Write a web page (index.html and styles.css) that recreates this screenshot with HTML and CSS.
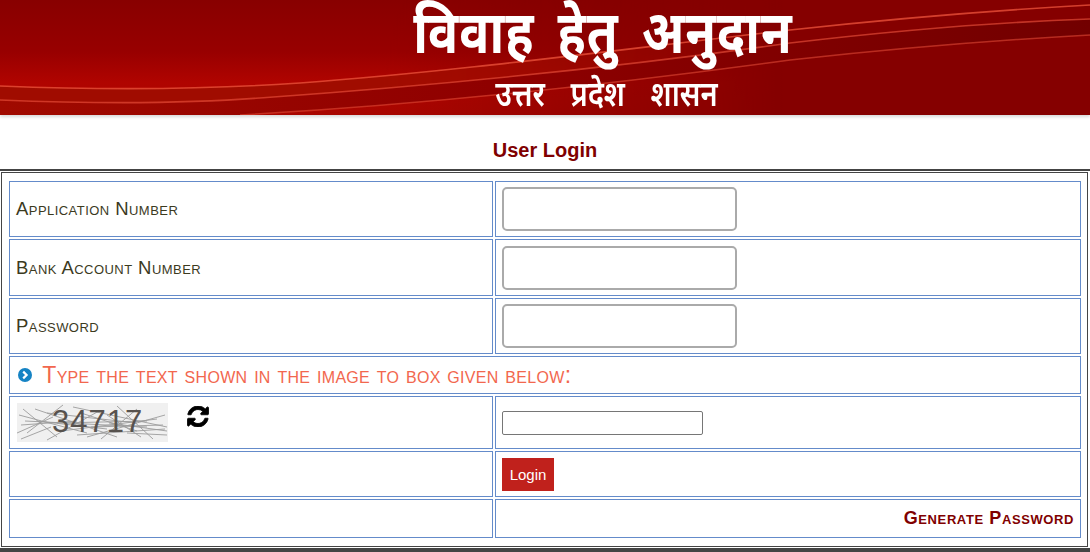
FILE: index.html
```
<!DOCTYPE html>
<html lang="hi">
<head>
<meta charset="utf-8">
<title>User Login</title>
<link rel="stylesheet" href="styles.css">
</head>
<body>
<header class="banner">
  <svg class="swoosh" viewBox="0 0 1090 115" preserveAspectRatio="none" aria-hidden="true">
    <defs>
      <linearGradient id="glow" x1="0" y1="0" x2="0" y2="1">
        <stop offset="0" stop-color="#880000"/>
        <stop offset="0.45" stop-color="#980000"/>
        <stop offset="0.72" stop-color="#b00400"/>
        <stop offset="1" stop-color="#a80600"/>
      </linearGradient>
      <linearGradient id="fade" x1="0" y1="0" x2="1" y2="0">
        <stop offset="0.35" stop-color="#fff"/>
        <stop offset="0.72" stop-color="#000"/>
      </linearGradient>
      <mask id="leftside">
        <rect width="1090" height="115" fill="url(#fade)"/>
      </mask>
      <linearGradient id="band" x1="0" y1="0" x2="1" y2="0">
        <stop offset="0" stop-color="#a00a00"/>
        <stop offset="0.45" stop-color="#8f0000"/>
        <stop offset="0.8" stop-color="#7c0000"/>
        <stop offset="1" stop-color="#720000"/>
      </linearGradient>
      <filter id="soft"><feGaussianBlur stdDeviation="0.5"/></filter>
    </defs>
    <rect width="1090" height="115" fill="#850000"/>
    <rect width="1090" height="115" fill="url(#glow)" mask="url(#leftside)"/>
    <path d="M0 86C100 90 200 90 300 83C450 72 600 52 790 30C900 18 1000 10 1090 5V19C1000 22 900 30 790 43C600 70 400 88 260 98C180 104 100 104 0 100Z" fill="#a00c00" mask="url(#leftside)"/>
    <path d="M0 100C100 104 180 104 260 98C400 88 600 70 790 43C900 30 1000 22 1090 19V35C1000 40 900 48 790 60C600 86 400 106 240 115H0Z" fill="url(#band)"/>
    <g fill="none" stroke="#e8503a" filter="url(#soft)">
      <path d="M0 86C100 90 200 90 300 83C450 72 600 52 790 30C900 18 1000 10 1090 5" stroke-width="1.6" opacity=".8"/>
      <path d="M0 100C100 104 180 104 260 98C400 88 600 70 790 43C900 30 1000 22 1090 19" stroke-width="1.6" opacity=".65"/>
      <path d="M240 115C400 106 600 86 790 60C900 48 1000 40 1090 35" stroke-width="1.5" opacity=".55"/>
    </g>
  </svg>
  <div class="banner-text">
    <div class="banner-main">विवाह हेतु अनुदान</div>
    <div class="banner-sub">उत्तर प्रदेश शासन</div>
  </div>
</header>
<h1 class="title">User Login</h1>
<hr class="rule">
<main class="frame">
  <table class="form">
    <tr class="r-a">
      <td class="label">Application Number</td>
      <td><input class="field" type="text"></td>
    </tr>
    <tr class="r-a2">
      <td class="label">Bank Account Number</td>
      <td><input class="field" type="text"></td>
    </tr>
    <tr class="r-a">
      <td class="label">Password</td>
      <td><input class="field" type="password"></td>
    </tr>
    <tr class="r-b">
      <td colspan="2" class="notice">
        <svg class="bullet" viewBox="0 0 14 14" aria-hidden="true">
          <circle cx="7" cy="7" r="7" fill="#1583c4"/>
          <path d="M5.200 3.600L8.600 7L5.200 10.400" fill="none" stroke="#fff" stroke-width="2.200"/>
        </svg>
        <span>Type the text shown in the image to box given below:</span>
      </td>
    </tr>
    <tr class="r-c">
      <td>
        <div class="captcha-row">
          <div class="captcha">
            <svg class="noise" viewBox="0 0 151 39" aria-hidden="true">
              <rect width="151" height="39" fill="#f0f0f0"/>
              <g fill="none" stroke="#9c9c9c" stroke-width=".9">
                <path d="M2 12L70 30M10 30L46 2M18 6L100 34M30 37L82 8M56 4L150 24M70 34L148 12M100 3L136 36M4 22L60 18M92 20L150 28M120 6L84 36M6 6L40 34M110 30L150 32M40 20L130 18"/>
                <path d="M0 30L36 14M64 10L120 28M74 24L146 22M20 18L90 26M8 18L130 24M44 28L140 16M30 10L120 20M60 32L148 26M90 12L124 34M4 36L34 24"/>
              </g>
            </svg>
            <span class="captcha-code">34717</span>
          </div>
          <svg class="refresh" viewBox="0 0 1536 1536" aria-hidden="true">
            <path d="M1511 928q0 5-1 7-64 268-268 434.500t-478 166.500q-146 0-282.500-55t-243.500-157l-129 129q-19 19-45 19t-45-19-19-45v-448q0-26 19-45t45-19h448q26 0 45 19t19 45-19 45l-137 137q71 66 161 102t187 36q134 0 250-65t186-179q11-17 53-117 8-23 30-23h192q13 0 22.500 9.500t9.500 22.500zm25-800v448q0 26-19 45t-45 19h-448q-26 0-45-19t-19-45 19-45l138-138q-148-137-349-137-134 0-250 65t-186 179q-11 17-53 117-8 23-30 23h-199q-13 0-22.500-9.500t-9.500-22.500v-7q65-268 270-434.500t480-166.500q146 0 284 55.500t245 156.500l130-129q19-19 45-19t45 19 19 45z"/>
          </svg>
        </div>
      </td>
      <td><input class="code-field" type="text"></td>
    </tr>
    <tr class="r-d">
      <td></td>
      <td><button class="login" type="button">Login</button></td>
    </tr>
    <tr class="r-e">
      <td></td>
      <td class="link-cell"><a class="generate" href="#">Generate Password</a></td>
    </tr>
  </table>
</main>
<hr class="rule rule-end">
</body>
</html>
```
FILE: styles.css
```
html, body {
  margin: 0;
  padding: 0;
  background: #fff;
  overflow: hidden;
}
body {
  font-family: "Liberation Sans", Arial, sans-serif;
  color: #3c3a1e;
}
.banner {
  position: relative;
  height: 115px;
  background: #850000;
  box-shadow: 0 2px 3px #d8d8d8;
}
.swoosh {
  display: block;
  width: 100%;
  height: 115px;
}
.banner-text {
  position: absolute;
  inset: 0;
  padding-top: 3px;
  text-align: center;
  color: #fff;
  font-family: "Noto Sans Devanagari", "Lohit Devanagari", "FreeSans", "Noto Sans", sans-serif;
  font-weight: 700;
  white-space: nowrap;
}
.banner-main {
  height: 74px;
  font-size: 50px;
  line-height: 60px;
  letter-spacing: 1px;
  word-spacing: 9px;
  padding-left: 116px;
  transform: scaleY(1.2);
  transform-origin: 50% 0;
}
.banner-sub {
  font-size: 29px;
  line-height: 34px;
  font-weight: 600;
  word-spacing: 18px;
  padding-left: 123px;
  transform: scaleY(1.2);
  transform-origin: 50% 0;
}
.title {
  margin: 0;
  height: 54px;
  padding-top: 23px;
  box-sizing: border-box;
  line-height: 24px;
  text-align: center;
  font-size: 20px;
  font-weight: 700;
  color: #800000;
}
.rule {
  margin: 0;
  border: 0;
  height: 2px;
  background: #444;
}
.rule-end {
  height: 4px;
  margin-top: 1px;
}
.frame {
  margin: 1px 2px 0 1px;
  height: 375px;
  box-sizing: border-box;
  border: 1px solid #444;
  padding: 6px 5px 0;
}
.form {
  width: 1076px;
  border-collapse: separate;
  border-spacing: 2px;
  table-layout: fixed;
}
.form td {
  border: 1px solid #648bca;
  padding: 0 6px;
  box-sizing: border-box;
  vertical-align: middle;
}
.form td:first-child:not([colspan]) {
  width: 484px;
}
.r-a td { height: 56px; }
.r-a2 td { height: 57px; }
.r-b td { height: 38px; }
.r-c td { height: 53px; }
.r-d td { height: 46px; }
.r-e td { height: 39px; }
.label {
  font-size: 18.500px;
  font-variant: small-caps;
  letter-spacing: .45px;
}
.field {
  display: block;
  width: 235px;
  height: 44px;
  box-sizing: border-box;
  border: 2px solid #aaa;
  border-radius: 5px;
  background: #fff;
  margin: 0;
}
.notice {
  font-size: 23px;
  font-variant: small-caps;
  color: #f2674e;
  letter-spacing: .3px;
  white-space: nowrap;
}
.bullet {
  width: 14px;
  height: 14px;
  margin: 0 4px 0 2px;
  vertical-align: 1px;
}
.captcha-row {
  display: flex;
  align-items: flex-start;
  gap: 19px;
  padding-left: 1px;
}
.captcha {
  position: relative;
  width: 151px;
  height: 39px;
}
.noise {
  display: block;
  width: 151px;
  height: 39px;
  filter: blur(.5px);
}
.captcha-code {
  position: absolute;
  left: 35px;
  top: 2px;
  font-size: 31px;
  line-height: 34px;
  letter-spacing: 1px;
  color: #57524e;
}
.refresh {
  width: 22px;
  height: 21px;
  margin-top: 3px;
  stroke: #000;
  stroke-width: 60px;
}
.code-field {
  display: block;
  width: 201px;
  height: 24px;
  box-sizing: border-box;
  border: 1px solid #767676;
  border-radius: 2px;
  background: #fff;
  margin: 0;
}
.login {
  display: block;
  width: 52px;
  height: 33px;
  border: 0;
  padding: 0;
  background: #c0211c;
  color: #fff;
  font-family: "Liberation Sans", Arial, sans-serif;
  font-size: 15px;
}
.link-cell {
  text-align: right;
}
.generate {
  font-size: 18px;
  font-weight: 700;
  font-variant: small-caps;
  color: #800000;
  text-decoration: none;
  letter-spacing: .6px;
}
```
